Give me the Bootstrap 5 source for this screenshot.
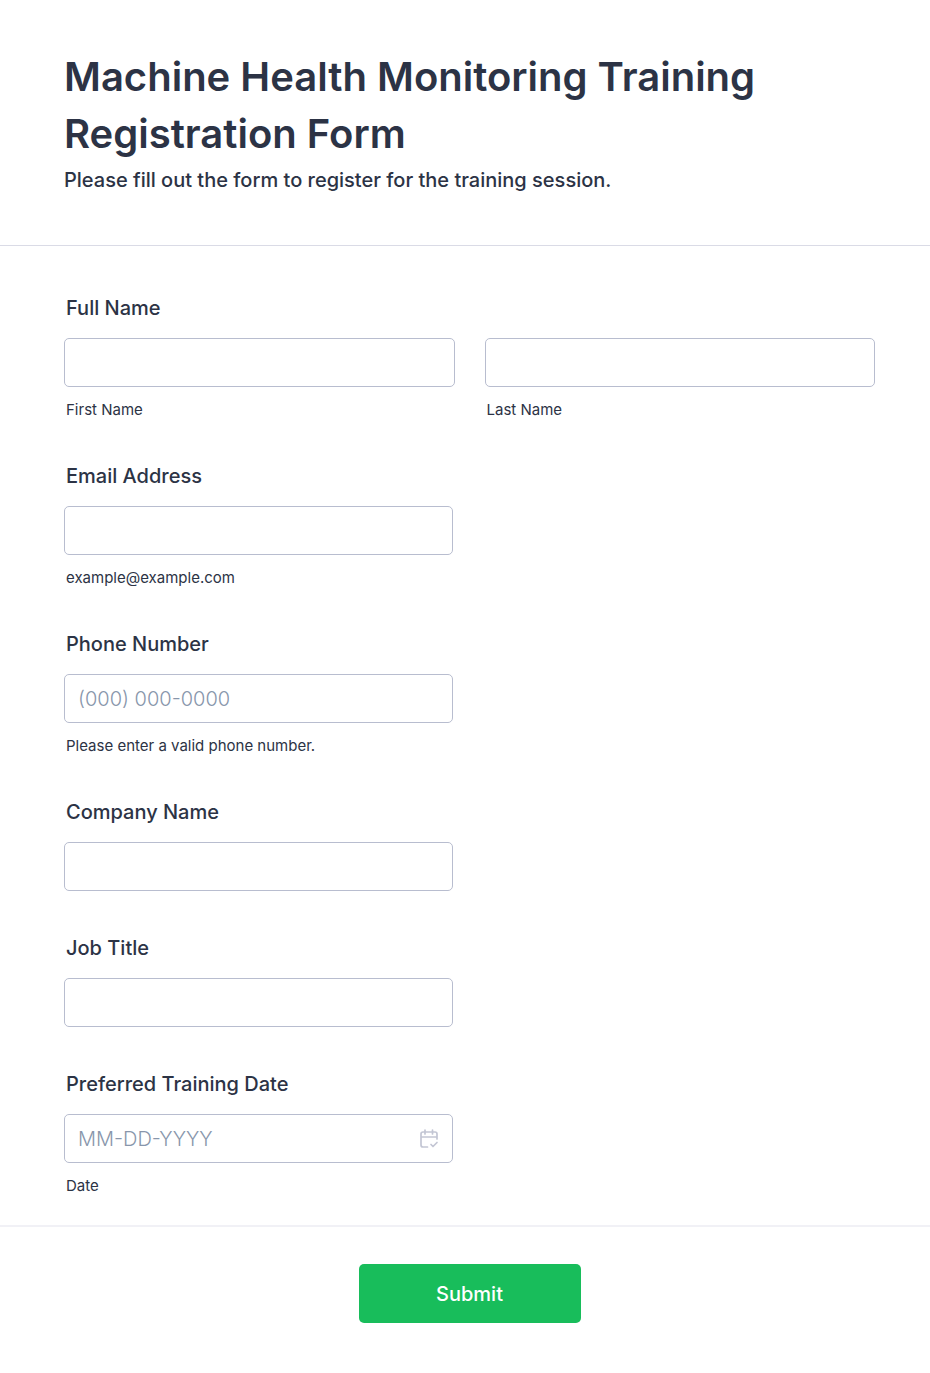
<!DOCTYPE html>
<html lang="en">
<head>
<meta charset="utf-8">
<meta name="viewport" content="width=device-width, initial-scale=1">
<title>Machine Health Monitoring Training Registration Form</title>
<link href="https://cdn.jsdelivr.net/npm/bootstrap@5.3.0/dist/css/bootstrap.min.css" rel="stylesheet">
<style>
  body { font-family: Inter, "Liberation Sans", sans-serif; color: #2c3345; background: #fff; }
  .form-section { padding-left: 64px; padding-right: 55px; }
  .form-header { padding-top: 48px; padding-bottom: 49px; border-bottom: 1px solid #dadbe6; }
  .form-title { font-size: 40px; line-height: 57px; font-weight: 600; color: #2c3345; }
  .form-subtitle { font-size: 20px; line-height: 32px; font-weight: 500; margin: 2px 0 0; }
  .form-fields { padding-top: 50px; padding-bottom: 30px; gap: 45px; }
  .field-label { font-size: 20px; line-height: 24px; font-weight: 500; margin: 0 0 18px 2px; padding: 0; }
  .field-box { height: 49px; padding: 0 13px; font-size: 20px; font-weight: 300; border: 1px solid #b8bdcf; border-radius: 5px; color: #2c3345; }
  .field-box::placeholder { color: #8896ab; font-weight: 300; }
  .field-hint { display: block; font-size: 15px; line-height: 19px; margin: 13px 0 0 2px; }
  .name-row { --bs-gutter-x: 30px; }
  .half-field { width: 48%; min-width: 240px; }
  .date-icon { right: 14px; color: #c3c6d4; }
  .form-footer { padding-top: 37px; padding-bottom: 50px; border-top: 2px solid #f1f1f6; }
  .submit-btn { width: 222px; height: 59px; font-size: 20px; font-weight: 500; color: #fff; background: #18bd5b; border: 0; border-radius: 5px; }
  .submit-btn:hover { background: #16aa52; color: #fff; }
</style>
</head>
<body>
<main>
  <header class="form-section form-header">
    <h1 class="form-title m-0">Machine Health Monitoring Training Registration Form</h1>
    <p class="form-subtitle">Please fill out the form to register for the training session.</p>
  </header>
  <form>
    <div class="form-section form-fields d-flex flex-column">
      <fieldset>
        <legend class="field-label">Full Name</legend>
        <div class="row name-row">
          <div class="col-6">
            <input class="form-control field-box" type="text" id="first">
            <label class="field-hint" for="first">First Name</label>
          </div>
          <div class="col-6">
            <input class="form-control field-box" type="text" id="last">
            <label class="field-hint" for="last">Last Name</label>
          </div>
        </div>
      </fieldset>
      <div class="half-field">
        <label class="field-label d-block" for="email">Email Address</label>
        <input class="form-control field-box" type="email" id="email" aria-describedby="email-hint">
        <span class="field-hint" id="email-hint">example@example.com</span>
      </div>
      <div class="half-field">
        <label class="field-label d-block" for="phone">Phone Number</label>
        <input class="form-control field-box" type="tel" id="phone" placeholder="(000) 000-0000" aria-describedby="phone-hint">
        <span class="field-hint" id="phone-hint">Please enter a valid phone number.</span>
      </div>
      <div class="half-field">
        <label class="field-label d-block" for="company">Company Name</label>
        <input class="form-control field-box" type="text" id="company">
      </div>
      <div class="half-field">
        <label class="field-label d-block" for="job">Job Title</label>
        <input class="form-control field-box" type="text" id="job">
      </div>
      <div class="half-field">
        <label class="field-label d-block" for="date">Preferred Training Date</label>
        <div class="position-relative">
          <input class="form-control field-box" type="text" id="date" placeholder="MM-DD-YYYY" aria-describedby="date-hint">
          <svg class="date-icon position-absolute top-50 translate-middle-y" width="20" height="20" viewBox="0 0 20 20" fill="none" stroke="currentColor" stroke-width="1.7" stroke-linecap="round" stroke-linejoin="round" aria-hidden="true">
            <path d="M8.500 18H4a2 2 0 0 1-2-2V5a2 2 0 0 1 2-2h12a2 2 0 0 1 2 2v5M2 8h16M6 1v4M13.500 1v4M12 15.500l2 2 4-4"/>
          </svg>
        </div>
        <span class="field-hint" id="date-hint">Date</span>
      </div>
    </div>
    <div class="form-section form-footer d-flex justify-content-center">
      <button class="btn submit-btn" type="submit">Submit</button>
    </div>
  </form>
</main>
<script src="https://cdn.jsdelivr.net/npm/bootstrap@5.3.0/dist/js/bootstrap.bundle.min.js"></script>
</body>
</html>
